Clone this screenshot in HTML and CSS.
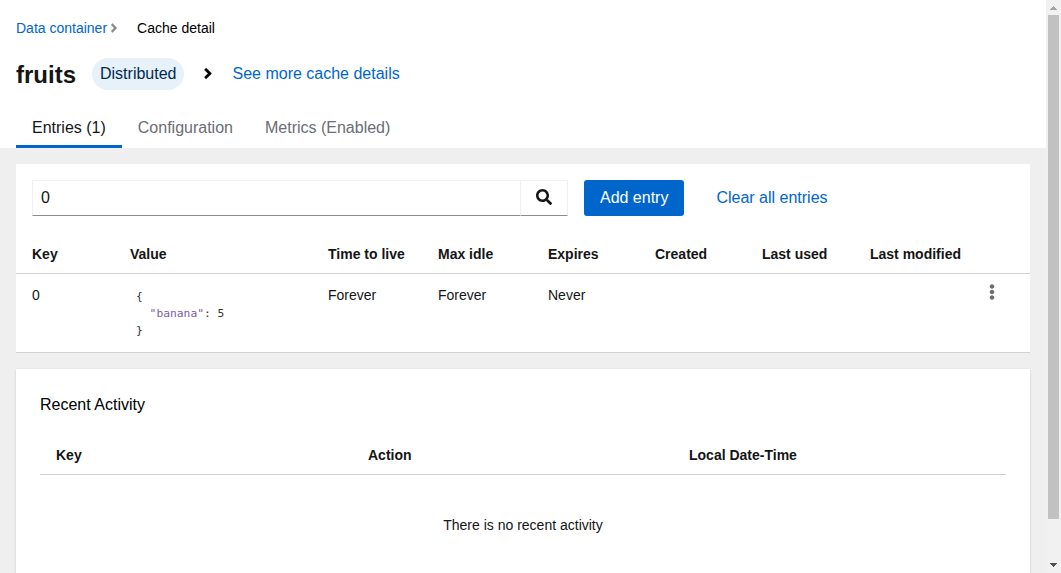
FILE: index.html
```html
<!DOCTYPE html>
<html lang="en">
<head>
<meta charset="utf-8">
<title>fruits - Cache detail</title>
<link rel="stylesheet" href="styles.css">
</head>
<body>
<div class="app">
  <main class="page">
    <header class="page-header">
      <nav class="breadcrumb">
        <a href="#">Data container</a>
        <svg class="crumb-divider" viewBox="0 0 256 512"><path d="M224.3 273l-136 136c-9.400 9.400-24.600 9.400-33.900 0l-22.600-22.600c-9.400-9.400-9.400-24.600 0-33.900l96.400-96.400-96.400-96.400c-9.400-9.400-9.400-24.600 0-33.900L54.300 103c9.400-9.400 24.600-9.400 33.900 0l136 136c9.500 9.400 9.500 24.600.1 34z"/></svg>
        <span>Cache detail</span>
      </nav>
      <div class="title-row">
        <h1>fruits</h1>
        <span class="label">Distributed</span>
        <svg class="expand-icon" viewBox="0 0 256 512"><path d="M224.300 273l-136 136c-9.400 9.400-24.600 9.400-33.900 0l-22.600-22.600c-9.400-9.400-9.400-24.600 0-33.900l96.400-96.400-96.400-96.400c-9.400-9.400-9.400-24.600 0-33.900L54.300 103c9.400-9.400 24.600-9.400 33.900 0l136 136c9.500 9.400 9.500 24.600.1 34z"/></svg>
        <a href="#">See more cache details</a>
      </div>
      <div class="tabs">
        <button class="tab tab-current">Entries (1)</button>
        <button class="tab">Configuration</button>
        <button class="tab">Metrics (Enabled)</button>
      </div>
    </header>
    <section class="content">
      <div class="entries">
        <div class="toolbar">
          <div class="search">
            <input class="search-input" type="text" value="0" aria-label="Search">
            <button class="search-button" aria-label="Search entries"><svg viewBox="0 0 512 512"><path d="M505 442.700L405.300 343c-4.500-4.500-10.600-7-17-7H372c27.600-35.300 44-79.700 44-128C416 93.100 322.900 0 208 0S0 93.100 0 208s93.100 208 208 208c48.300 0 92.700-16.400 128-44v16.300c0 6.400 2.500 12.500 7 17l99.700 99.700c9.400 9.400 24.600 9.400 33.900 0l28.300-28.300c9.400-9.400 9.400-24.600.1-34zM208 336c-70.700 0-128-57.200-128-128 0-70.700 57.200-128 128-128 70.700 0 128 57.200 128 128 0 70.700-57.200 128-128 128z"/></svg></button>
          </div>
          <button class="primary">Add entry</button>
          <a class="clear" href="#">Clear all entries</a>
        </div>
        <div class="entry-row entry-head">
          <span>Key</span><span>Value</span><span>Time to live</span><span>Max idle</span><span>Expires</span><span>Created</span><span>Last used</span><span>Last modified</span>
        </div>
        <div class="entry-row entry-body">
          <span>0</span>
          <div class="value">
            <div>{</div>
            <div class="json-member"><span class="json-key">"banana"</span><span>: 5</span></div>
            <div>}</div>
          </div>
          <span>Forever</span><span>Forever</span><span>Never</span><span></span><span></span><span></span>
          <button class="kebab" aria-label="Actions"><svg viewBox="0 0 192 512"><path d="M96 184c39.800 0 72 32.200 72 72s-32.200 72-72 72-72-32.200-72-72 32.200-72 72-72zM24 80c0 39.800 32.200 72 72 72s72-32.200 72-72S135.800 8 96 8 24 40.200 24 80zm0 352c0 39.800 32.200 72 72 72s72-32.200 72-72-32.200-72-72-72-72 32.200-72 72z"/></svg></button>
        </div>
      </div>
      <div class="activity">
        <h2>Recent Activity</h2>
        <div class="activity-head"><span>Key</span><span>Action</span><span>Local Date-Time</span></div>
        <p class="empty">There is no recent activity</p>
      </div>
    </section>
  </main>
  <div class="scrollbar">
    <svg class="arrow arrow-up" viewBox="0 0 7 4" shape-rendering="crispEdges"><path d="M3 0h1v1h1v1h1v1h1v1H0V3h1V2h1V1h1z"/></svg>
    <div class="thumb"></div>
    <svg class="arrow" viewBox="0 0 7 4" shape-rendering="crispEdges"><path d="M0 0h7v1H6v1H5v1H4v1H3V3H2V2H1V1H0z"/></svg>
  </div>
</div>
</body>
</html>
```
FILE: styles.css
```css
* { box-sizing: border-box; }
body {
  margin: 0;
  overflow: hidden;
  font: 14px/21px "Liberation Sans", Arial, sans-serif;
  color: #151515;
}
button, input { font: inherit; color: inherit; margin: 0; }
button { border: 0; background: none; padding: 0; }
a { color: #06c; text-decoration: none; }
svg { display: block; fill: currentColor; }
h1, h2, p { margin: 0; }

.app { display: flex; height: 573px; }
.page { flex: 1; min-width: 0; display: flex; flex-direction: column; overflow: hidden; background: #efefef; }

.page-header { flex: none; height: 148px; padding: 16px 16px 0; background: #fff; }
.breadcrumb { display: flex; align-items: center; height: 24px; color: #000; }
.crumb-divider { width: 8px; height: 14px; margin: 0 19px 0 3px; color: #8a8d90; stroke: currentColor; stroke-width: 10; }
.title-row { display: flex; align-items: center; height: 32px; margin-top: 18px; font-size: 16px; line-height: 24px; }
.title-row h1 { font-size: 24px; line-height: 32px; width: 76px; padding-top: 2px; }
.label { height: 32px; padding: 4px 8px; border-radius: 16px; background: #e7f1fa; color: #002952; }
.expand-icon { width: 10px; height: 17px; margin: 0 19px 1px; color: #000; stroke: currentColor; stroke-width: 10; }
.tabs { display: flex; margin-top: 18px; height: 40px; font-size: 16px; line-height: 24px; }
.tab { padding: 2px 16px 0; border-bottom: 3px solid transparent; color: #6a6e73; }
.tab-current { border-color: #06c; color: #151515; }

.content { display: flex; flex-direction: column; gap: 16px; padding: 16px; }
.entries { background: #fff; }
.toolbar { display: flex; padding: 16px 16px 0; font-size: 16px; line-height: 24px; }
.search { display: flex; width: 536px; height: 36px; }
.search-input { width: 488px; height: 36px; padding: 0 8px; border: 1px solid #f0f0f0; border-right: 0; border-bottom-color: #8a8d90; border-radius: 0; outline: 0; }
.search-button { flex: 1; display: flex; align-items: center; justify-content: center; padding-bottom: 2px; border: 1px solid #f0f0f0; border-bottom-color: #8a8d90; }
.search-button svg { width: 16px; height: 16px; }
.primary { width: 100.4px; height: 36px; margin: 0 32px 0 16px; border-radius: 3px; background: #06c; color: #fff; }
.clear { padding-top: 6px; }
.entry-row { display: grid; grid-template-columns: 98px 198px 110px 110px 107px 107px 108px 118px 1fr; padding-left: 16px; border-bottom: 1px solid #d2d2d2; }
.entry-head { height: 58px; padding-top: 28px; font-weight: 700; }
.entry-body { height: 79px; padding-top: 11px; }
.value { padding: 3px 0 0 6px; font: 11.3px/17px "DejaVu Sans Mono", monospace; color: #333; }
.json-member { display: flex; padding-left: 2ch; white-space: pre; }
.json-key { color: #795da3; }
.kebab { justify-self: start; align-self: start; width: 8px; height: 16px; margin: -1px 0 0 1px; color: #6a6e73; }
.kebab svg { width: 6px; height: 16px; }

.activity { height: 260px; padding: 24px; background: #fff; box-shadow: 0 1px 2px rgba(3,3,3,.12), 0 0 2px rgba(3,3,3,.06); }
.activity h2 { font-size: 16px; line-height: 24px; font-weight: 400; color: #000; }
.activity-head { display: grid; grid-template-columns: 312px 321px 1fr; height: 58px; padding: 28px 16px 0; border-bottom: 1px solid #d2d2d2; font-weight: 700; }
.empty { padding-top: 40px; text-align: center; }

.scrollbar { flex: none; width: 15px; display: flex; flex-direction: column; align-items: center; padding: 6px 0; background: #f1f1f1; color: #505050; }
.arrow { width: 7px; height: 4px; }
.arrow-up { color: #a3a3a3; }
.thumb { width: 11px; height: 504px; margin: 5px 0 44px; background: #c1c1c1; }
```
